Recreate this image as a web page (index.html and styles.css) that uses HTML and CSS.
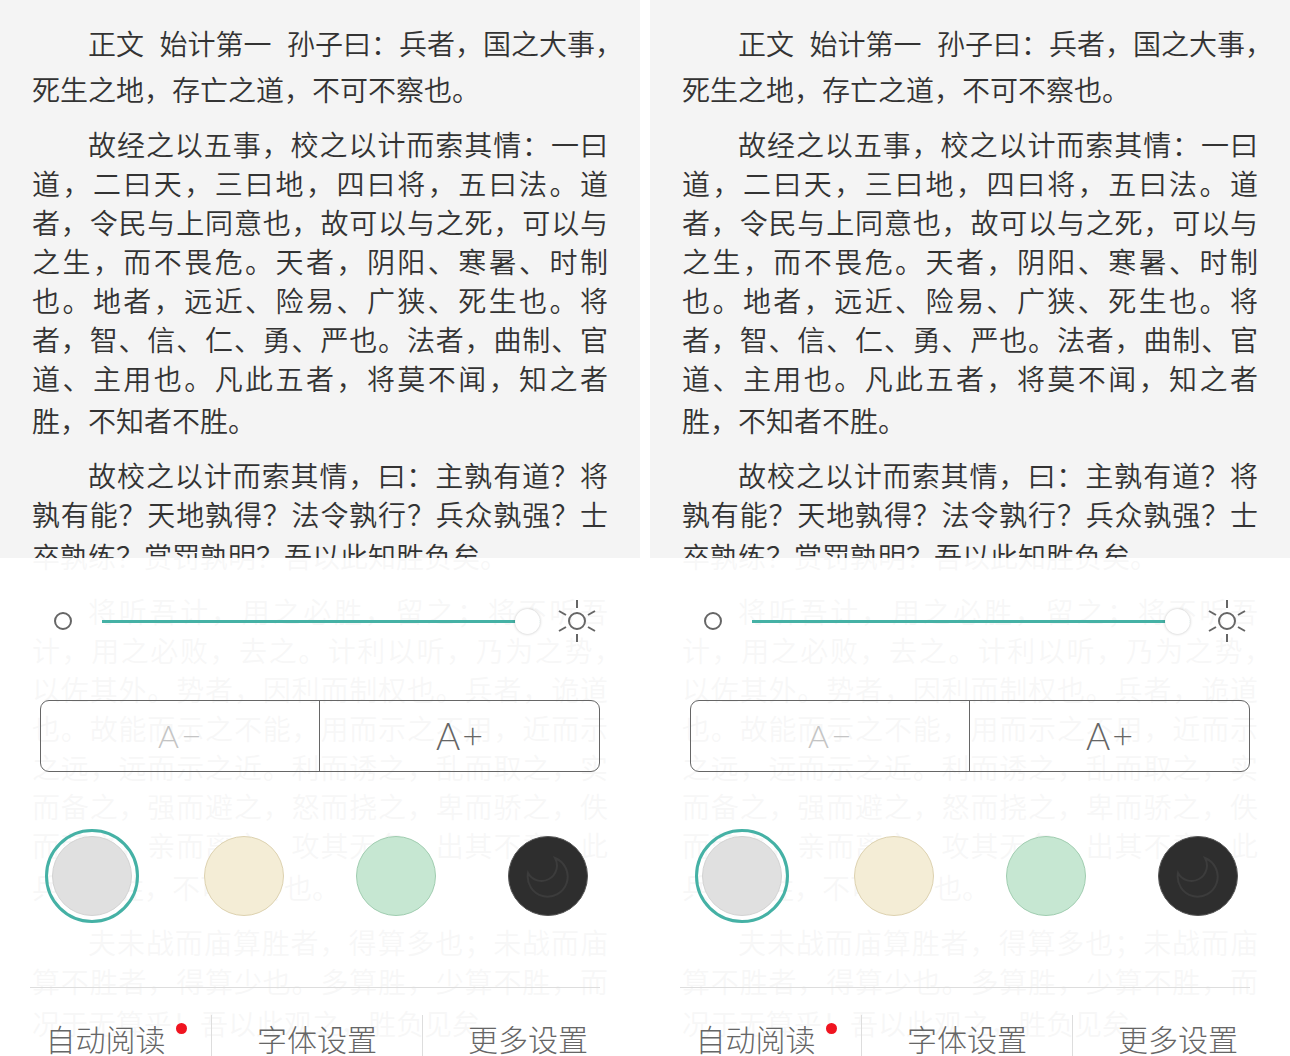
FILE: index.html
```
<!DOCTYPE html>
<html lang="zh-CN">
<head>
<meta charset="utf-8">
<title>孙子兵法</title>
<link rel="stylesheet" href="styles.css">
</head>
<body>
<main class="screens" id="screens">
  <section class="phone">
    <article class="book">
      <p><span class="line tall start">正文&nbsp;&nbsp;始计第一&nbsp;&nbsp;孙子曰：兵者，国之大事，</span><span class="line tall last">死生之地，存亡之道，不可不察也。</span></p>
      <p><span class="line">故经之以五事，校之以计而索其情：一曰</span><span class="line">道，二曰天，三曰地，四曰将，五曰法。道</span><span class="line">者，令民与上同意也，故可以与之死，可以与</span><span class="line">之生，而不畏危。天者，阴阳、寒暑、时制</span><span class="line">也。地者，远近、险易、广狭、死生也。将</span><span class="line">者，智、信、仁、勇、严也。法者，曲制、官</span><span class="line">道、主用也。凡此五者，将莫不闻，知之者</span><span class="line tall last">胜，不知者不胜。</span></p>
      <p><span class="line">故校之以计而索其情，曰：主孰有道？将</span><span class="line">孰有能？天地孰得？法令孰行？兵众孰强？士</span><span class="line tall last">卒孰练？赏罚孰明？吾以此知胜负矣。</span></p>
      <p><span class="line">将听吾计，用之必胜，留之；将不听吾</span><span class="line hang">计，用之必败，去之。计利以听，乃为之势，</span><span class="line">以佐其外。势者，因利而制权也。兵者，诡道</span><span class="line">也。故能而示之不能，用而示之不用，近而示</span><span class="line">之远，远而示之近。利而诱之，乱而取之，实</span><span class="line">而备之，强而避之，怒而挠之，卑而骄之，佚</span><span class="line">而劳之，亲而离之，攻其无备，出其不意。此</span><span class="line tall last">兵家之胜，不可先传也。</span></p>
      <p><span class="line">夫未战而庙算胜者，得算多也；未战而庙</span><span class="line">算不胜者，得算少也。多算胜，少算不胜，而</span><span class="line tall last">况于无算乎！吾以此观之，胜负见矣。</span></p>
    </article>
    <form class="panel">
      <div class="brightness">
        <svg class="dim" viewBox="0 0 20 20" aria-hidden="true"><circle cx="10" cy="10" r="8"/></svg>
        <input type="range" min="0" max="100" value="100" aria-label="亮度">
        <svg class="sun" viewBox="0 0 42 42" aria-hidden="true"><circle cx="21" cy="21" r="8"/><path d="M21 0v8M21 34v8M3 11l7 4M32 15l7-4M3 31l7-4M32 27l7 4"/></svg>
      </div>
      <div class="sizes">
        <button type="button" class="smaller" disabled>A<span>−</span></button>
        <button type="button" class="larger">A<span>+</span></button>
      </div>
      <div class="themes">
        <button type="button" class="theme gray selected" aria-label="灰色"></button>
        <button type="button" class="theme cream" aria-label="米色"></button>
        <button type="button" class="theme green" aria-label="绿色"></button>
        <button type="button" class="theme night" aria-label="夜间"><svg viewBox="0 0 44 44" aria-hidden="true"><path d="M29 4A15 15 0 0 1 2 19A20 20 0 1 0 29 4Z"/></svg></button>
      </div>
      <div class="tabs">
        <button type="button">自动阅读<i class="dot"></i></button>
        <button type="button">字体设置</button>
        <button type="button">更多设置</button>
      </div>
    </form>
  </section>
</main>
<script src="script.js"></script>
</body>
</html>
```
FILE: script.js
```
// Show the same reader screen side by side.
const screens = document.getElementById('screens');
screens.append(screens.firstElementChild.cloneNode(true));
```
FILE: styles.css
```
* { box-sizing: border-box; }
body {
  margin: 0;
  background: #fff;
  color: #333;
  font-family: "Liberation Sans", "Noto Sans CJK SC", sans-serif;
  font-weight: 300;
}
button {
  margin: 0;
  padding: 0;
  border: 0;
  background: none;
  color: inherit;
  font: inherit;
}
.screens {
  display: grid;
  grid-template-columns: 1fr 1fr;
  gap: 10px;
  height: 100vh;
}
.phone {
  position: relative;
  overflow: hidden;
  background: #f4f4f4;
}
.book {
  padding: 23px 32px 0;
  font-family: "Liberation Sans", "Noto Sans CJK SC DemiLight", "Noto Sans CJK SC", sans-serif;
  font-size: 28px;
  font-weight: 350;
}
.book p {
  margin: 0 0 12px;
  text-indent: 56px;
}
.line {
  display: block;
  height: 39px;
  line-height: 39px;
  text-align-last: justify;
  white-space: nowrap;
}
.line + .line { text-indent: 0; }
.tall {
  height: 46px;
  line-height: 46px;
}
.start, .last { text-align-last: left; }
/* The closing comma hangs half its width into the margin. */
.hang { margin-right: -14px; }

.panel {
  position: absolute;
  inset: auto 0 0;
  background: rgba(255, 255, 255, .96);
  color: #666;
}
.brightness {
  display: flex;
  align-items: center;
  height: 126px;
  padding: 0 42px 0 53px;
}
.brightness svg {
  flex: none;
  fill: none;
  stroke: #666;
  stroke-width: 2;
}
.dim { width: 20px; height: 20px; }
.sun { width: 42px; height: 42px; }
.brightness input {
  flex: 1;
  min-width: 0;
  height: 26px;
  margin: 0 16px 0 29px;
  appearance: none;
  background: linear-gradient(#45b1a5, #45b1a5) center / 100% 3px no-repeat;
}
.brightness input::-webkit-slider-thumb {
  appearance: none;
  width: 25px;
  height: 25px;
  border-radius: 50%;
  background: #fff;
  box-shadow: 0 0 3px rgba(0, 0, 0, .25);
}
.sizes {
  display: grid;
  grid-template-columns: 1fr 1fr;
  height: 72px;
  margin: 16px 40px 0;
  border: 1px solid #666;
  border-radius: 9px;
}
.sizes button {
  display: flex;
  align-items: center;
  justify-content: center;
  gap: 2px;
  padding-bottom: 2px;
  font-family: Lato, sans-serif;
}
.sizes .smaller {
  border-right: 1px solid #666;
  color: #c4c4c4;
  font-size: 32px;
}
.larger { font-size: 37px; }
.sizes span {
  font-size: 36px;
  font-weight: 300;
}
.themes {
  display: flex;
  justify-content: space-between;
  padding: 64px 52px 71px;
}
.theme {
  display: grid;
  place-items: center;
  width: 80px;
  height: 80px;
  border: 1px solid;
  border-radius: 50%;
}
.gray { background: #e0e0e0; border-color: #d3d3d3; }
.cream { background: #f4edd6; border-color: #ddd2b0; }
.green { background: #c6e7d2; border-color: #a0cdb0; }
.night { background: #2e2e2e; border-color: #555; }
.selected { outline: 3px solid #45b1a5; outline-offset: 4px; }
.night svg {
  width: 44px;
  height: 44px;
  fill: none;
  stroke: #3c3c3c;
  stroke-width: 2;
}
.tabs {
  display: grid;
  grid-template-columns: repeat(3, 1fr);
  padding: 28px 7px 0 0;
  background: linear-gradient(#ddd, #ddd) 30px 0 / calc(100% - 70px) 1px no-repeat;
}
.tabs button {
  position: relative;
  height: 41px;
  padding-top: 8px;
  font-size: 30px;
  line-height: 36px;
}
.tabs button + button { border-left: 1px solid #ddd; }
.dot {
  position: absolute;
  top: 8px;
  right: 24px;
  width: 11px;
  height: 11px;
  border-radius: 50%;
  background: #f01420;
}
```
